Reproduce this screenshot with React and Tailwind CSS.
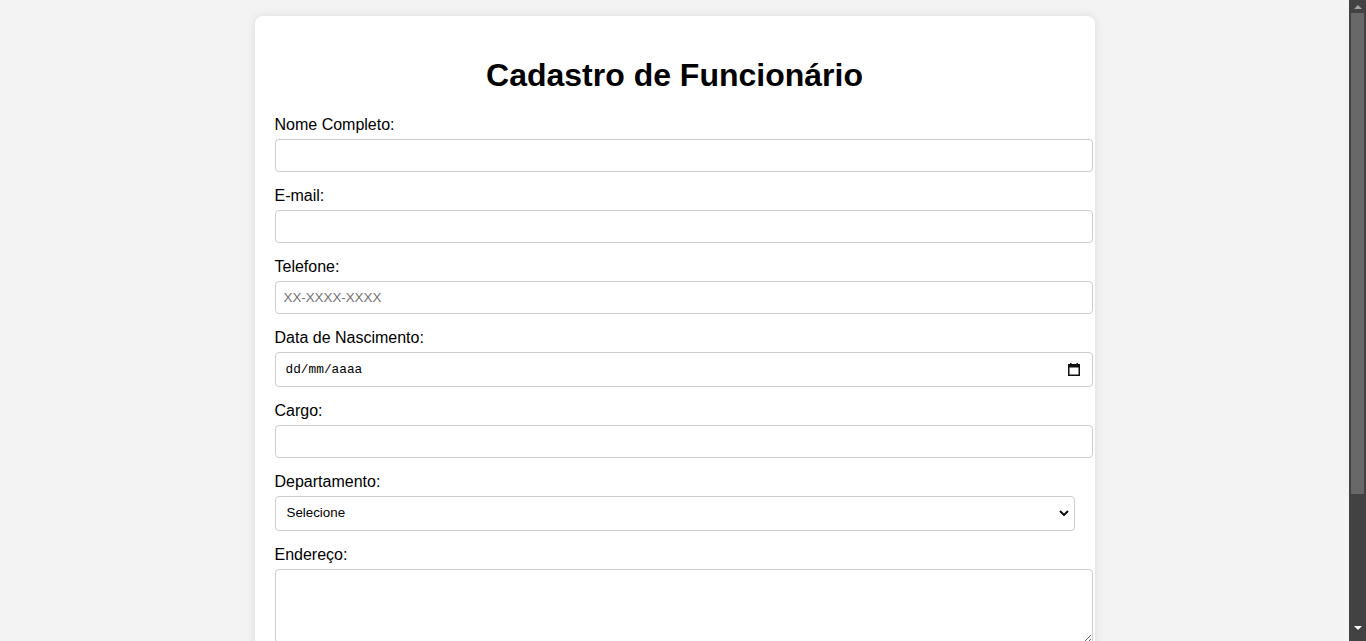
import React from "react";

const fieldInput =
  "block w-[818px] h-[33px] px-2 border border-[#cccccc] rounded-[4px] bg-white text-[13.333px] leading-[15px] text-black placeholder:text-[#757575] outline-none";

function Label({ children }) {
  return <label className="block text-[16px] leading-[18px] mb-[5px] text-black">{children}</label>;
}

function CalendarIcon() {
  return (
    <svg width="12" height="13" viewBox="0 0 12 13" className="shrink-0">
      <rect x="2" y="0" width="1.5" height="2" fill="#111" />
      <rect x="8.5" y="0" width="1.5" height="2" fill="#111" />
      <rect x="0.75" y="1.75" width="10.5" height="10.5" fill="none" stroke="#111" strokeWidth="1.5" />
      <rect x="0.75" y="2" width="10.5" height="2.5" fill="#111" />
    </svg>
  );
}

function Chevron() {
  return (
    <svg width="10" height="6" viewBox="0 0 10 6" className="shrink-0">
      <path d="M1 1 L5 5 L9 1" fill="none" stroke="#111" strokeWidth="2" />
    </svg>
  );
}

export default function App() {
  return (
    <div className="flex h-[641px] w-full overflow-hidden font-['Liberation_Sans',Arial,sans-serif]">
      <main className="flex-1 bg-[#f3f3f3] pt-4 overflow-hidden">
        <div className="mx-auto w-[840px] bg-white rounded-lg shadow-[0_0_10px_rgba(0,0,0,0.1)] p-5">
          <h1 className="text-[32px] leading-[37px] font-bold text-center text-black my-[21.44px]">
            Cadastro de Funcionário
          </h1>

          <div className="mb-[15px]">
            <Label>Nome Completo:</Label>
            <input type="text" className={fieldInput} />
          </div>

          <div className="mb-[15px]">
            <Label>E-mail:</Label>
            <input type="email" className={fieldInput} />
          </div>

          <div className="mb-[15px]">
            <Label>Telefone:</Label>
            <input type="text" placeholder="XX-XXXX-XXXX" className={fieldInput} />
          </div>

          <div className="mb-[15px]">
            <Label>Data de Nascimento:</Label>
            <div className="flex items-center justify-between w-[818px] h-[35px] pl-[10px] pr-[12px] border border-[#cccccc] rounded-[4px] bg-white">
              <span className="font-['Liberation_Mono',monospace] text-[12.8px] text-black">dd/mm/aaaa</span>
              <CalendarIcon />
            </div>
          </div>

          <div className="mb-[15px]">
            <Label>Cargo:</Label>
            <input type="text" className={fieldInput} />
          </div>

          <div className="mb-[15px]">
            <Label>Departamento:</Label>
            <div className="flex items-center justify-between w-[800px] h-[35px] pl-[11px] pr-[5px] border border-[#cccccc] rounded-[4px] bg-white">
              <span className="text-[13.333px] text-black">Selecione</span>
              <Chevron />
            </div>
          </div>

          <div className="mb-[15px]">
            <Label>Endereço:</Label>
            <textarea className="block w-[818px] h-[75px] p-2 border border-[#cccccc] rounded-[4px] bg-white text-[13.333px] outline-none" />
          </div>
        </div>
      </main>

      <aside className="w-[17px] h-full bg-[#424242] flex flex-col items-center">
        <div className="h-[13px] w-full flex items-center justify-center">
          <svg width="8" height="4" viewBox="0 0 8 4">
            <path d="M0 4 L4 0 L8 4 Z" fill="#a3a3a3" />
          </svg>
        </div>
        <div className="w-[13px] h-[481px] bg-[#686868]" />
        <div className="flex-1" />
        <div className="h-[15px] w-full flex items-start justify-center">
          <svg width="8" height="4" viewBox="0 0 8 4">
            <path d="M0 0 L8 0 L4 4 Z" fill="#ffffff" />
          </svg>
        </div>
      </aside>
    </div>
  );
}
